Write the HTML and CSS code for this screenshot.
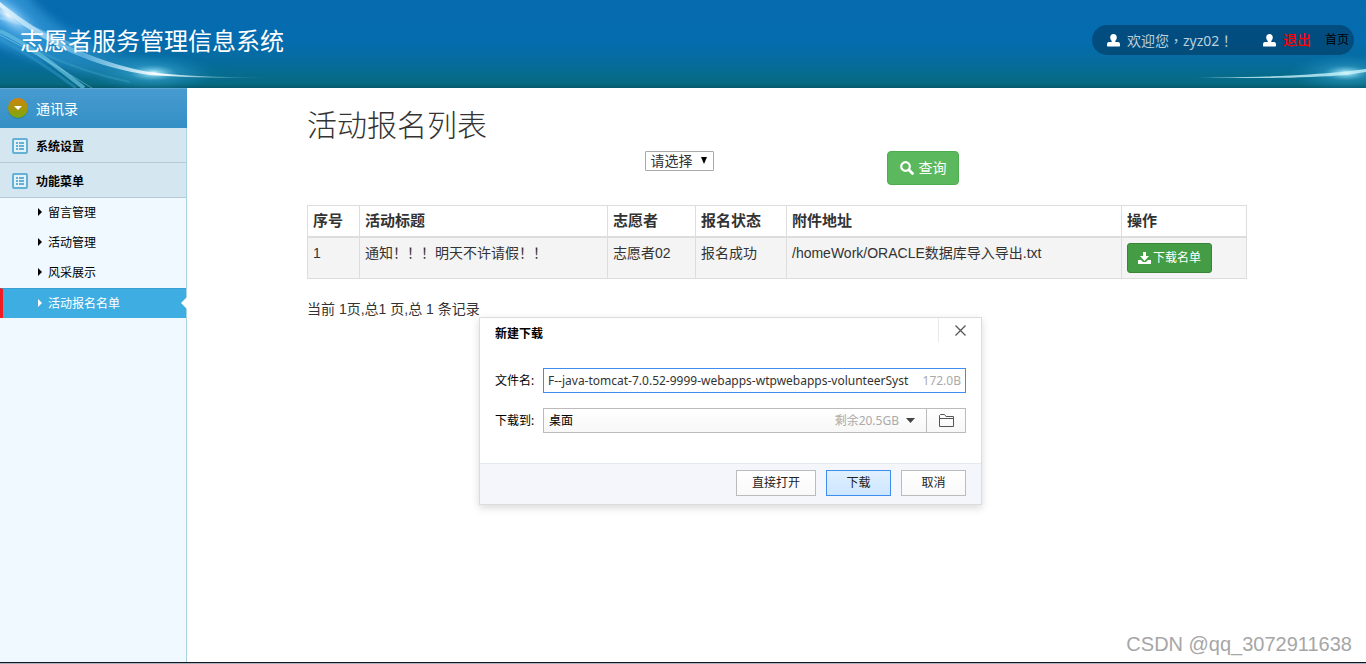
FILE: index.html
```html
<!DOCTYPE html>
<html lang="zh-CN">
<head>
<meta charset="utf-8">
<title>志愿者服务管理信息系统</title>
<link rel="stylesheet" href="styles.css">
</head>
<body>
<div class="page">
  <header class="top">
    <svg class="glow glow-left" width="340" height="88" viewBox="0 0 340 88" aria-hidden="true">
      <defs>
        <radialGradient id="spot"><stop offset="0" stop-color="#fff"/><stop offset=".12" stop-color="#9be4f8" stop-opacity=".8"/><stop offset=".4" stop-color="#3aa9d6" stop-opacity=".4"/><stop offset="1" stop-color="#1c8fc8" stop-opacity="0"/></radialGradient>
        <radialGradient id="corner"><stop offset="0" stop-color="#fff" stop-opacity=".95"/><stop offset=".35" stop-color="#7cc4f5" stop-opacity=".75"/><stop offset="1" stop-color="#1b82cd" stop-opacity="0"/></radialGradient>
        <linearGradient id="beam" x1="0" x2="1"><stop offset="0" stop-color="#e2f4ff" stop-opacity=".95"/><stop offset=".3" stop-color="#7cc8ee" stop-opacity=".6"/><stop offset=".58" stop-color="#fff"/><stop offset="1" stop-color="#46b6cf" stop-opacity="0"/></linearGradient>
        <linearGradient id="veil" x1="0" x2="1"><stop offset="0" stop-color="#4eb1ef" stop-opacity=".6"/><stop offset="1" stop-color="#2798cc" stop-opacity="0"/></linearGradient>
        <filter id="soft" x="-20%" y="-30%" width="140%" height="160%"><feGaussianBlur stdDeviation="5"/></filter>
      </defs>
      <path d="M-10 -10H24C60 44 150 70 260 77L150 82C90 78 30 60 -10 40Z" fill="url(#veil)" filter="url(#soft)"/>
      <ellipse cx="8" cy="15" rx="56" ry="20" transform="rotate(38 8 15)" fill="url(#corner)"/>
      <ellipse cx="153" cy="73" rx="60" ry="20" fill="url(#spot)"/>
      <path d="M0 2C46 40 105 66 156 73C200 77 240 78 275 77C225 79 180 77 150 75C98 68 46 47 0 7Z" fill="url(#beam)"/>
      <path d="M0 18C30 24 56 38 84 50" fill="none" stroke="#b9e5ff" stroke-opacity=".35" stroke-width="3"/>
      <path d="M0 31C32 46 58 68 84 88" fill="none" stroke="#63bddd" stroke-opacity=".75" stroke-width="4"/>
      <path d="M0 35C36 53 64 71 92 88" fill="none" stroke="#9ddcf1" stroke-opacity=".45"/>
      <path d="M0 39C30 55 56 73 76 88" fill="none" stroke="#3298c9" stroke-opacity=".5" stroke-width="3"/>
      <path d="M40 52C72 67 100 76 130 82" fill="none" stroke="#4cb2d2" stroke-opacity=".3" stroke-width="2"/>
    </svg>
    <svg class="glow glow-right" width="190" height="50" viewBox="0 0 190 50" aria-hidden="true">
      <ellipse cx="170" cy="35" rx="56" ry="19" fill="url(#spot)"/>
      <path d="M20 39C80 40 130 37 166 34L190 31V34L170 37C130 40 80 41 20 39Z" fill="#c8f2fa" fill-opacity=".8"/>
    </svg>
    <h1 class="brand">志愿者服务管理信息系统</h1>
    <nav class="user-bar">
      <svg class="user-icon" viewBox="0 0 13 13" aria-hidden="true"><path d="M6.500 0C8.600 0 9.800 1.500 9.800 3.500C9.800 5 9 6.300 8.300 7V8H11C12.500 8 13 9 13 10.500V11.500C13 12.200 12.700 12.500 12 12.500H1C.3 12.500 0 12.200 0 11.500V10.500C0 9 .5 8 2 8H4.700V7C4 6.300 3.200 5 3.200 3.500C3.200 1.500 4.400 0 6.500 0Z" fill="#fff"/></svg>
      <span class="welcome">欢迎您<span class="punct" lang="zh-TW">，</span>zyz02<span class="punct" lang="zh-TW">！</span></span>
      <svg class="user-icon" viewBox="0 0 13 13" aria-hidden="true"><path d="M6.500 0C8.600 0 9.800 1.500 9.800 3.500C9.800 5 9 6.300 8.300 7V8H11C12.500 8 13 9 13 10.500V11.500C13 12.200 12.700 12.500 12 12.500H1C.3 12.500 0 12.200 0 11.500V10.500C0 9 .5 8 2 8H4.700V7C4 6.300 3.200 5 3.200 3.500C3.200 1.500 4.400 0 6.500 0Z" fill="#fff"/></svg>
      <a class="logout" href="#">退出</a>
      <a class="home" href="#">首页</a>
    </nav>
  </header>

  <div class="body">
    <aside class="side">
      <div class="side-head">
        <svg width="20" height="21" viewBox="0 0 20 21" aria-hidden="true"><defs><linearGradient id="ball" x2="0" y2="1"><stop offset="0" stop-color="#d3820b"/><stop offset="1" stop-color="#79aa0c"/></linearGradient></defs><circle cx="10" cy="11" r="10" fill="#2a6c93" opacity=".6"/><circle cx="10" cy="10" r="10" fill="url(#ball)"/><path d="M6 8H14L10 12Z" fill="#fff"/></svg>
        <span>通讯录</span>
      </div>
      <a class="group" href="#"><svg width="16" height="16" viewBox="0 0 16 16" aria-hidden="true"><rect x="1" y="1" width="14" height="14" rx="1" fill="#e3f2f8" stroke="#65b1d5" stroke-width="2"/><path d="M4 5H6M7 5H12M4 8H6M7 8H12M4 11H6M7 11H12" stroke="#65b1d5" stroke-width="2"/></svg><span>系统设置</span></a>
      <a class="group" href="#"><svg width="16" height="16" viewBox="0 0 16 16" aria-hidden="true"><rect x="1" y="1" width="14" height="14" rx="1" fill="#e3f2f8" stroke="#65b1d5" stroke-width="2"/><path d="M4 5H6M7 5H12M4 8H6M7 8H12M4 11H6M7 11H12" stroke="#65b1d5" stroke-width="2"/></svg><span>功能菜单</span></a>
      <ul class="menu">
        <li><a href="#">留言管理</a></li>
        <li><a href="#">活动管理</a></li>
        <li><a href="#">风采展示</a></li>
        <li class="active"><a href="#">活动报名名单</a></li>
      </ul>
    </aside>

    <main class="content">
      <h2 class="title">活动报名列表</h2>
      <form class="filter">
        <div class="select-box">
          <select aria-label="报名状态"><option>请选择</option></select>
          <svg width="6" height="7" viewBox="0 0 6 7" aria-hidden="true"><path d="M0 0H6L3 7Z" fill="#000"/></svg>
        </div>
        <button class="btn btn-search" type="button"><svg width="14" height="14" viewBox="0 0 14 14" aria-hidden="true"><circle cx="5.500" cy="5.500" r="4.300" fill="none" stroke="#fff" stroke-width="2.200"/><path d="M9 9L12.500 12.500" stroke="#fff" stroke-width="2.800" stroke-linecap="round"/></svg><span>查询</span></button>
      </form>
      <table class="list">
        <colgroup><col class="c-no"><col class="c-title"><col class="c-name"><col class="c-state"><col><col class="c-act"></colgroup>
        <thead><tr><th>序号</th><th>活动标题</th><th>志愿者</th><th>报名状态</th><th>附件地址</th><th>操作</th></tr></thead>
        <tbody><tr>
          <td>1</td><td>通知！！！明天不许请假！！</td><td>志愿者02</td><td>报名成功</td><td>/homeWork/ORACLE数据库导入导出.txt</td>
          <td><button class="btn btn-down" type="button"><svg width="13" height="13" viewBox="0 0 13 13" aria-hidden="true"><path d="M5 0H8V4H11L6.500 9L2 4H5Z" fill="#fff"/><path d="M0 8H3L5 10H8L10 8H13V12H0Z" fill="#fff"/></svg><span>下载名单</span></button></td>
        </tr></tbody>
      </table>
      <p class="pager">当前 1页,总1 页,总 1 条记录</p>
    </main>
  </div>

  <section class="dialog" role="dialog" aria-labelledby="dlg-title">
    <div class="dlg-head">
      <h3 id="dlg-title">新建下载</h3>
      <button class="close" type="button" aria-label="关闭"><svg width="11" height="11" viewBox="0 0 11 11" aria-hidden="true"><path d="M.5.5L10.500 10.500M10.500.5L.5 10.500" stroke="#555" stroke-width="1.300"/></svg></button>
    </div>
    <div class="dlg-form">
      <label for="fname">文件名:</label>
      <div class="field field-name"><input id="fname" type="text" value="F--java-tomcat-7.0.52-9999-webapps-wtpwebapps-volunteerSyst"><span class="hint">172.0B</span></div>
      <label for="dest">下载到:</label>
      <div class="field field-dest">
        <select id="dest"><option>桌面</option></select>
        <span class="hint">剩余20.5GB</span>
        <svg class="arrow" width="9" height="5" viewBox="0 0 9 5" aria-hidden="true"><path d="M0 0H9L4.500 5Z" fill="#444"/></svg>
        <button class="folder" type="button" aria-label="浏览"><svg width="15" height="13" viewBox="0 0 15 13" aria-hidden="true"><path d="M.5 12.500V1.500L1.500.5H5.500L7 2.500H14.500V12.500ZM.5 4.500H14.500" fill="none" stroke="#555"/></svg></button>
      </div>
    </div>
    <div class="dlg-foot">
      <button class="wide" type="button">直接打开</button>
      <button class="primary" type="button">下载</button>
      <button type="button">取消</button>
    </div>
  </section>
  <div class="watermark">CSDN @qq_3072911638</div>
</div>
</body>
</html>
```
FILE: styles.css
```css
* { box-sizing: border-box; }

body {
  margin: 0;
  font: 14px/20px "Liberation Sans", "Noto Sans CJK SC", sans-serif;
  color: #333;
  background: #fff;
  border-bottom: 1px solid #a9b0bd;
}

a { color: inherit; text-decoration: none; }
button, input, select { font: inherit; color: inherit; margin: 0; }
svg { display: block; flex: none; }

.page {
  position: relative;
  display: flex;
  flex-direction: column;
  min-height: calc(100vh - 1px);
  border-bottom: 1px solid #15151f;
}

/* Header */
.top {
  position: relative;
  display: flex;
  align-items: center;
  justify-content: space-between;
  height: 88px;
  padding: 0 12px 8px 20px;
  background: linear-gradient(#066aae 0, #056cb0 45%, #066c9e 70%, #076a82 95%, #06596a 100%);
}
.glow { position: absolute; }
.glow-left { left: 0; top: 0; }
.glow-right { right: 0; bottom: 0; }
.brand {
  position: relative;
  margin: 0;
  font: 24px/32px "Noto Sans CJK SC", sans-serif;
  color: #fff;
}
.user-bar {
  position: relative;
  display: flex;
  align-items: center;
  height: 30px;
  padding: 0 5px 0 15px;
  border-radius: 15px;
  background: rgba(0, 40, 70, .45);
  font-family: "Noto Sans", "Noto Sans CJK SC", sans-serif;
}
.user-icon { width: 13px; height: 13px; margin-right: 7px; }
.welcome { width: 136px; color: #b9d0dd; }
.punct { font-family: "Noto Sans CJK TC", sans-serif; }
.logout { color: #f00; font-weight: 500; margin-right: 14px; }
.home { font-size: 12px; color: #000; }

/* Sidebar */
.body { display: flex; flex: 1; }
.side {
  flex: none;
  width: 187px;
  border-right: 1px solid #a9d5e2;
  background: #f0f9ff;
  font: 12px/18px "Noto Sans CJK SC", sans-serif;
  color: #000;
}
.side-head {
  display: flex;
  align-items: center;
  gap: 8px;
  height: 40px;
  margin-right: -1px;
  padding: 0 8px 1px;
  font-size: 14px;
  color: #fff;
  border-top: 1px solid #60aad5;
  background: linear-gradient(#479bd0, #348fc5);
}
.group {
  display: flex;
  align-items: center;
  gap: 8px;
  height: 35px;
  padding: 1px 0 0 12px;
  font-weight: 700;
  border-bottom: 1px solid #b5cbd7;
  background: #d4e7f0;
}
.menu { margin: 0; padding: 0; list-style: none; }
.menu a {
  display: flex;
  align-items: center;
  gap: 6px;
  height: 30px;
  padding: 0 0 2px 38px;
}
.menu a::before {
  content: "";
  border: solid transparent;
  border-width: 4px 0 4px 4px;
  border-left-color: currentColor;
}
.menu .active {
  position: relative;
  color: #fff;
  background: #3eaee2;
  border-top: 1px solid #37a0d0;
  border-left: 3px solid #ef1c24;
}
.menu .active a { height: 29px; padding-left: 35px; }
.menu .active::after {
  content: "";
  position: absolute;
  right: -1px;
  top: 8px;
  border: solid transparent;
  border-width: 6px 6px 6px 0;
  border-right-color: #fff;
}

/* Content */
.content { flex: 1; min-width: 0; padding: 15px 119px 0 120px; }
.title {
  margin: 0;
  font: 300 30px/40px "Noto Sans CJK SC", sans-serif;
}
.filter {
  display: flex;
  align-items: flex-start;
  gap: 173px;
  margin: 8px 0 20px;
  padding-left: 36%;
}
.select-box { position: relative; }
.select-box select {
  display: block;
  width: 69px;
  height: 20px;
  padding: 0 4px;
  line-height: 18px;
  border: 1px solid #a9a9a9;
  border-radius: 1px;
  background: #fff;
  appearance: none;
}
.select-box svg { position: absolute; right: 7px; top: 6px; pointer-events: none; }
.btn {
  display: flex;
  align-items: center;
  justify-content: center;
  color: #fff;
  border: 1px solid #4cae4c;
  border-radius: 4px;
  background: #5cb85c;
}
.btn-search { gap: 4px; height: 34px; padding: 0 12px; }
.btn-down {
  gap: 2px;
  height: 30px;
  padding: 0 10px;
  font-size: 12px;
  border-color: #398439;
  border-radius: 3px;
  background: #449d44;
}

.list {
  width: 100%;
  table-layout: fixed;
  border-collapse: collapse;
}
.c-no { width: 52px; }
.c-title { width: 248px; }
.c-name { width: 88px; }
.c-state { width: 91px; }
.c-act { width: 125px; }
.list th, .list td {
  padding: 5px;
  border: 1px solid #ddd;
  text-align: left;
  vertical-align: top;
}
.list th { font-size: 15px; border-bottom-width: 2px; }
.list td { background: #f4f4f4; }
.pager { margin: 20px 0 0; }

/* Download dialog */
.dialog {
  position: absolute;
  left: 479px;
  top: 317px;
  width: 503px;
  font: 12px/18px "Noto Sans", "Noto Sans CJK SC", sans-serif;
  color: #000;
  border: 1px solid #dcdcdc;
  background: #fff;
  box-shadow: 0 3px 8px rgba(0, 0, 0, .15);
}
.dlg-head { display: flex; justify-content: space-between; height: 50px; }
.dlg-head h3 { margin: 7px 0 0 15px; font-size: 12px; line-height: 18px; }
.close {
  display: flex;
  align-items: center;
  justify-content: center;
  width: 43px;
  height: 24px;
  border: 0;
  border-left: 1px solid #e8e8e8;
  background: none;
}
.dlg-form {
  display: grid;
  grid-template-columns: 40px 1fr;
  align-items: center;
  gap: 15px 8px;
  padding: 0 15px 30px;
}
.field { display: flex; align-items: center; height: 25px; border: 1px solid #bbb; }
.field-name { border-color: #3d8ef0; padding: 0 4px; }
.field-name input {
  flex: 1;
  min-width: 0;
  height: 23px;
  padding: 0;
  border: 0;
  outline: 0;
  color: #333;
  background: none;
}
.hint { color: #aaa; }
.field-dest { background: linear-gradient(#fff, #f7f7f7); }
.field-dest select {
  flex: 1;
  height: 23px;
  padding: 0 5px;
  border: 0;
  background: none;
  appearance: none;
}
.arrow { margin: 0 11px 0 7px; }
.folder {
  display: flex;
  align-items: center;
  justify-content: center;
  width: 39px;
  height: 23px;
  border: 0;
  border-left: 1px solid #bbb;
  background: none;
}
.dlg-foot {
  display: flex;
  justify-content: flex-end;
  gap: 10px;
  padding: 6px 15px 8px;
  border-top: 1px solid #e4eaf0;
  background: #f5f6fb;
}
.dlg-foot button {
  width: 65px;
  height: 26px;
  padding: 0 0 1px;
  color: #222;
  border: 1px solid #bbb;
  background: linear-gradient(#fff, #f9f9f9);
}
.dlg-foot .wide { width: 80px; }
.dlg-foot .primary { border-color: #3d8ef0; background: linear-gradient(#e0f0ff, #cde6ff); }

.watermark {
  position: absolute;
  right: 14px;
  bottom: 6px;
  font-size: 20px;
  line-height: 24px;
  color: #a6a6a6;
}
```
